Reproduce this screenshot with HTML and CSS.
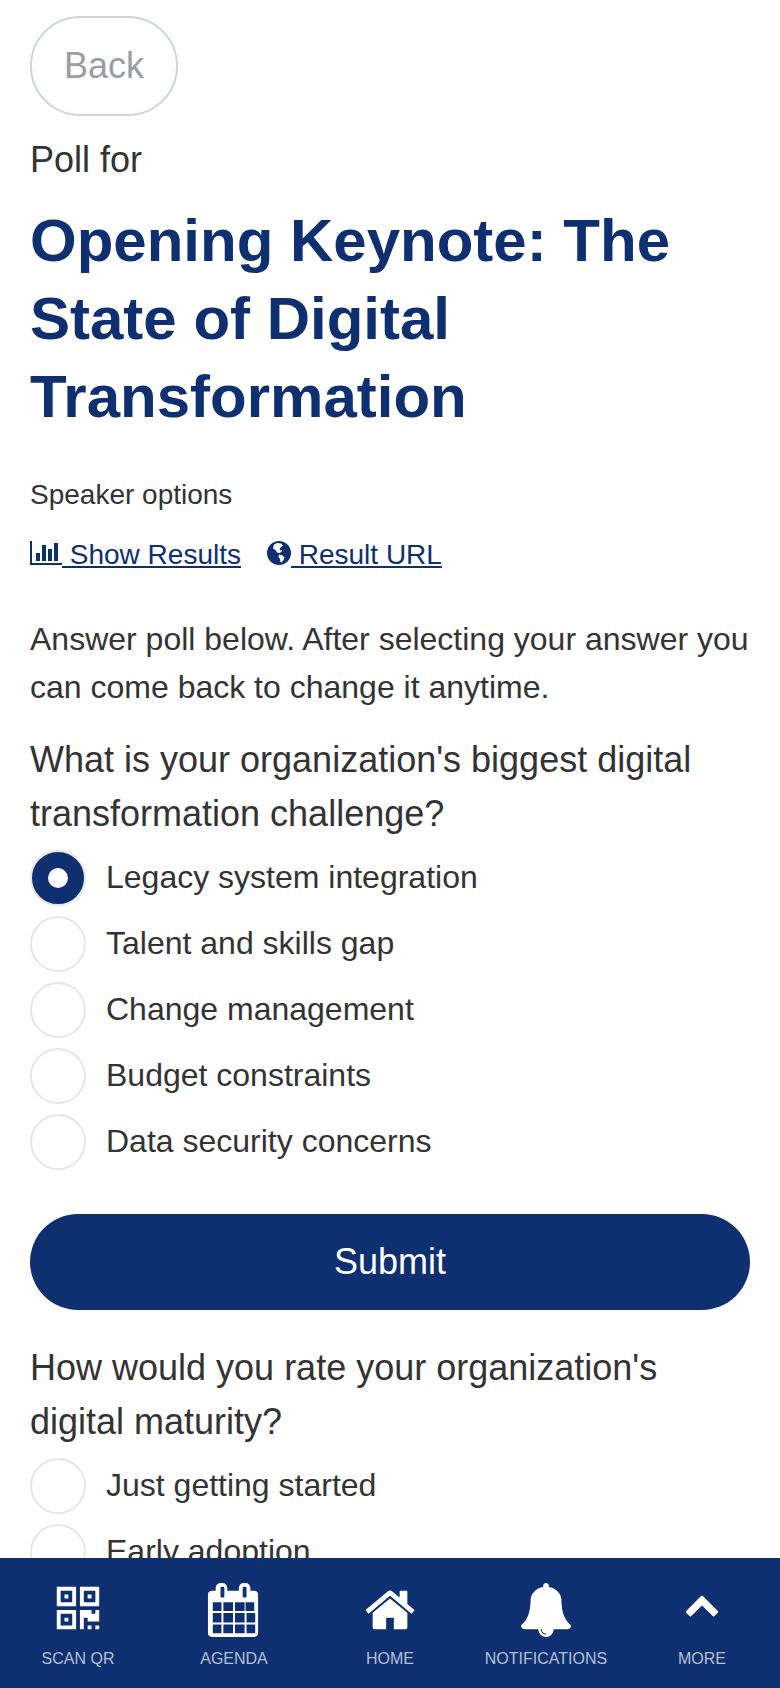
FILE: index.html
```html
<!DOCTYPE html>
<html lang="en">
<head>
<meta charset="utf-8">
<title>Poll</title>
<link rel="stylesheet" href="styles.css">
</head>
<body>
<main class="page">
  <button class="back">Back</button>
  <p class="poll-for">Poll for</p>
  <h1 class="title">Opening Keynote: The State of Digital Transformation</h1>
  <p class="speaker">Speaker options</p>
  <div class="links">
    <a class="link" href="#"><svg class="ic-bars" viewBox="0 0 2048 1792"><path d="M640 896v512h-256v-512h256zm384-512v1024h-256v-1024h256zm1024 1152v128h-2048v-1536h128v1408h1920zm-640-896v768h-256v-768h256zm384-384v1152h-256v-1152h256z"/></svg> Show Results</a>
    <a class="link" href="#"><svg class="ic-globe" viewBox="0 0 24 24"><circle cx="12" cy="12" r="12"/><path class="land" d="M7 3.5l3-1.5 4 .5 2 2-2 1.5-1.5 2 1 1.5 1.5-.5-.5 2-2.5 1-2-.5-1.5-2.5-2.5-1.5zM12 13.5l3.5 1 2 2-1 2.5-2 2.5-1-.5-.5-3-1.5-2z"/></svg> Result URL</a>
  </div>
  <p class="intro">Answer poll below. After selecting your answer you can come back to change it anytime.</p>

  <section class="question">
    <h2 class="q-text">What is your organization's biggest digital transformation challenge?</h2>
    <ul class="options">
      <li class="option"><span class="radio radio-on"></span>Legacy system integration</li>
      <li class="option"><span class="radio"></span>Talent and skills gap</li>
      <li class="option"><span class="radio"></span>Change management</li>
      <li class="option"><span class="radio"></span>Budget constraints</li>
      <li class="option"><span class="radio"></span>Data security concerns</li>
    </ul>
    <button class="submit">Submit</button>
  </section>

  <section class="question">
    <h2 class="q-text">How would you rate your organization's digital maturity?</h2>
    <ul class="options">
      <li class="option"><span class="radio"></span>Just getting started</li>
      <li class="option"><span class="radio"></span>Early adoption</li>
    </ul>
  </section>
</main>

<nav class="nav">
  <a class="nav-item" href="#"><svg class="nav-ic" viewBox="0 0 1792 1792"><path d="M576 1152v128h-128v-128h128zm0-768v128h-128v-128h128zm768 0v128h-128v-128h128zm-1024 1023h384v-383h-384v383zm0-767h384v-384h-384v384zm768 0h384v-384h-384v384zm-256 256v640h-640v-640h640zm512 512v128h-128v-128h128zm256 0v128h-128v-128h128zm0-512v384h-384v-128h-128v384h-128v-640h384v128h128v-128h128zm-768-768v640h-640v-640h640zm768 0v640h-640v-640h640z"/></svg><span>SCAN QR</span></a>
  <a class="nav-item" href="#"><svg class="nav-ic" viewBox="0 0 1792 1792"><path d="M192 1664h288v-288h-288v288zm352 0h320v-288h-320v288zm-352-352h288v-320h-288v320zm352 0h320v-320h-320v320zm-352-384h288v-288h-288v288zm736 736h320v-288h-320v288zm-384-736h320v-288h-320v288zm768 736h288v-288h-288v288zm-384-352h320v-320h-320v320zm-352-864v-288q0-13-9.5-22.5t-22.5-9.5h-64q-13 0-22.5 9.5t-9.5 22.5v288q0 13 9.5 22.5t22.5 9.5h64q13 0 22.5-9.5t9.5-22.5zm736 864h288v-320h-288v320zm-384-384h320v-288h-320v288zm352 0h288v-288h-288v288zm32-480v-288q0-13-9.5-22.5t-22.5-9.5h-64q-13 0-22.5 9.5t-9.5 22.5v288q0 13 9.5 22.5t22.5 9.5h64q13 0 22.5-9.5t9.5-22.5zm384-64v1280q0 52-38 90t-90 38h-1408q-52 0-90-38t-38-90v-1280q0-52 38-90t90-38h128v-96q0-66 47-113t113-47h64q66 0 113 47t47 113v96h384v-96q0-66 47-113t113-47h64q66 0 113 47t47 113v96h128q52 0 90 38t38 90z"/></svg><span>AGENDA</span></a>
  <a class="nav-item" href="#"><svg class="nav-ic" viewBox="0 0 1792 1792"><path d="M1472 992v480q0 26-19 45t-45 19h-384v-384h-256v384h-384q-26 0-45-19t-19-45v-480q0-1 .5-3t.5-3l575-474 575 474q1 2 1 6zm223-69l-62 74q-8 9-21 11h-3q-13 0-21-7l-692-577-692 577q-12 8-24 7-13-2-21-11l-62-74q-8-10-7-23.5t11-21.5l719-599q32-26 76-26t76 26l244 204v-195q0-14 9-23t23-9h192q14 0 23 9t9 23v408l219 182q10 8 11 21.5t-7 23.5z"/></svg><span>HOME</span></a>
  <a class="nav-item" href="#"><svg class="nav-ic" viewBox="0 0 1792 1792"><path d="M912 1696q0-16-16-16-59 0-101.5-42.5t-42.5-101.5q0-16-16-16t-16 16q0 73 51.5 124.5t124.5 51.5q16 0 16-16zm816-288q0 52-38 90t-90 38h-448q0 106-75 181t-181 75-181-75-75-181h-448q-52 0-90-38t-38-90q50-42 91-88t85-119.5 74.5-158.5 50-206 19.5-260q0-152 117-282.5t307-158.5q-8-19-8-39 0-40 28-68t68-28 68 28 28 68q0 20-8 39 190 28 307 158.5t117 282.5q0 139 19.5 260t50 206 74.5 158.5 85 119.5 91 88z"/></svg><span>NOTIFICATIONS</span></a>
  <a class="nav-item" href="#"><span class="nav-box"><svg class="nav-ic-small" viewBox="0 0 1792 1792"><path d="M1683 1331l-166 165q-19 19-45 19t-45-19l-531-531-531 531q-19 19-45 19t-45-19l-166-165q-19-19-19-45.5t19-45.5l742-741q19-19 45-19t45 19l742 741q19 19 19 45.5t-19 45.5z"/></svg></span><span>MORE</span></a>
</nav>
</body>
</html>
```
FILE: styles.css
```css
* { box-sizing: border-box; }
html, body { margin: 0; height: 100%; overflow: hidden; background: #fff; }
body { font-family: "Liberation Sans", Arial, sans-serif; color: #333; }

.page { padding: 16px 30px 0; }

.back {
  display: block;
  width: 148px;
  height: 100px;
  padding: 0;
  background: #fff;
  border: 2px solid #ced4da;
  border-radius: 50px;
  color: #989ea6;
  font: 36px/54px "Liberation Sans", Arial, sans-serif;
}

.poll-for { margin: 17px 0 0; font-size: 36px; line-height: 54px; }

.title {
  margin: 15px 0 0;
  color: #0e3070;
  font-size: 60px;
  line-height: 78px;
  font-weight: 700;
}

.speaker { margin: 38px 0 0; font-size: 28px; line-height: 42px; }

.links { display: flex; gap: 26px; margin-top: 18px; }
.link { color: #0e3070; font-size: 28px; line-height: 42px; text-decoration: underline; }
.ic-bars { width: 32px; height: 28px; fill: #0e3070; vertical-align: -3px; }
.ic-globe { width: 24px; height: 24px; fill: #0e3070; vertical-align: -1px; }
.land { fill: #fff; }

.intro { margin: 39px 0 0; font-size: 32px; line-height: 48px; }

.question { margin-top: 22px; }
.question + .question { margin-top: 31px; }
.q-text { margin: 0; font-size: 36px; line-height: 54px; font-weight: 400; }

.options { list-style: none; margin: 8px 0 0; padding: 0; display: flex; flex-direction: column; gap: 10px; }
.option { display: flex; align-items: center; gap: 20px; height: 56px; font-size: 32px; }
.radio {
  flex: none;
  width: 56px;
  height: 56px;
  margin-top: 2px;
  border: 2px solid #e6e6e6;
  border-radius: 50%;
  background: #fff;
}
.radio-on { background: #0e3070; position: relative; }
.radio-on::after {
  content: "";
  position: absolute;
  left: 50%;
  top: 50%;
  width: 20px;
  height: 20px;
  margin: -10px 0 0 -10px;
  border-radius: 50%;
  background: #fff;
}

.submit {
  display: block;
  width: 100%;
  height: 96px;
  margin-top: 45px;
  border: 0;
  border-radius: 48px;
  background: #0e3070;
  color: #fff;
  font: 36px/54px "Liberation Sans", Arial, sans-serif;
}

.nav {
  position: fixed;
  left: 0;
  right: 0;
  bottom: 0;
  height: 130px;
  display: grid;
  grid-template-columns: repeat(5, 1fr);
  background: #0e3070;
}
.nav-item {
  display: flex;
  flex-direction: column;
  align-items: center;
  padding-top: 25px;
  color: #b4c0d6;
  font-size: 16px;
  line-height: 24px;
  text-decoration: none;
}
.nav-ic { width: 54px; height: 54px; fill: #fff; margin-bottom: 10px; }
.nav-box { display: flex; align-items: center; justify-content: center; width: 54px; height: 54px; padding-bottom: 12px; margin-bottom: 10px; }
.nav-ic-small { width: 36px; height: 36px; fill: #fff; }
```
